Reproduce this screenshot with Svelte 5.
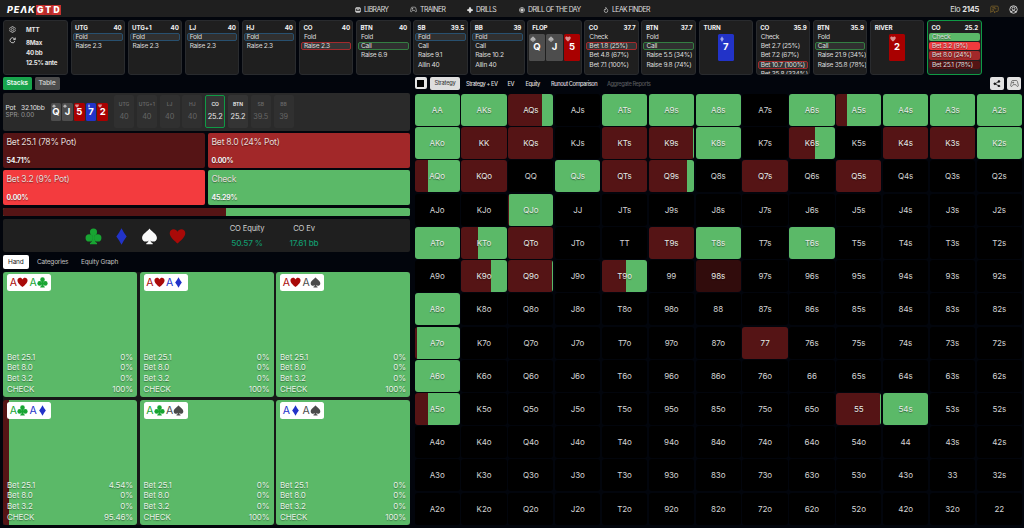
<script>
  const seats = [
    { n: 'UTG', s: '40', a: ['Fold', 'Raise 2.3'], pick: 0, tone: 'blue' },
    { n: 'UTG+1', s: '40', a: ['Fold', 'Raise 2.3'], pick: 0, tone: 'blue' },
    { n: 'LJ', s: '40', a: ['Fold', 'Raise 2.3'], pick: 0, tone: 'blue' },
    { n: 'HJ', s: '40', a: ['Fold', 'Raise 2.3'], pick: 0, tone: 'blue' },
    { n: 'CO', s: '40', a: ['Fold', 'Raise 2.3'], pick: 1, tone: 'red' },
    { n: 'BTN', s: '40', a: ['Fold', 'Call', 'Raise 6.9'], pick: 1, tone: 'green' },
    { n: 'SB', s: '39.5', a: ['Fold', 'Call', 'Raise 9.1', 'Allin 40'], pick: 0, tone: 'blue' },
    { n: 'BB', s: '39', a: ['Fold', 'Call', 'Raise 10.2', 'Allin 40'], pick: 0, tone: 'blue' },
    { n: 'FLOP', cards: [['Q', 'spade'], ['J', 'spade'], ['5', 'heart']] },
    { n: 'CO', s: '37.7', a: ['Check', 'Bet 1.8 (25%)', 'Bet 4.8 (67%)', 'Bet 7.1 (100%)'], pick: 1, tone: 'red' },
    { n: 'BTN', s: '37.7', a: ['Fold', 'Call', 'Raise 5.5 (34%)', 'Raise 9.8 (74%)'], pick: 1, tone: 'green' },
    { n: 'TURN', cards: [['7', 'diamond']] },
    { n: 'CO', s: '35.9', a: ['Check', 'Bet 2.7 (25%)', 'Bet 7.2 (67%)', 'Bet 10.7 (100%)', 'Bet 35.8 (334%)'], pick: 3, tone: 'red' },
    { n: 'BTN', s: '35.9', a: ['Fold', 'Call', 'Raise 21.9 (34%)', 'Raise 35.8 (78%)'], pick: 1, tone: 'green' },
    { n: 'RIVER', cards: [['2', 'heart']] },
    { n: 'CO', s: '25.2', a: ['Check', 'Bet 3.2 (9%)', 'Bet 8.0 (24%)', 'Bet 25.1 (78%)'], active: true }
  ];
  const board = [['Q', 'spade'], ['J', 'spade'], ['5', 'heart'], ['7', 'diamond'], ['2', 'heart']];
  const stacks = [['UTG', '40'], ['UTG+1', '40'], ['LJ', '40'], ['HJ', '40'], ['CO', '25.2'], ['BTN', '25.2'], ['SB', '39.5'], ['BB', '39']];
  const bets = [
    ['Bet 25.1 (78% Pot)', '54.71%', 'maroon'],
    ['Bet 8.0 (24% Pot)', '0.00%', 'brick'],
    ['Bet 3.2 (9% Pot)', '0.00%', 'red'],
    ['Check', '45.29%', 'green']
  ];
  const combos = [
    { c: ['heart', 'club'], v: ['0%', '0%', '0%', '100%'], r: 0 },
    { c: ['heart', 'diamond'], v: ['0%', '0%', '0%', '100%'], r: 0 },
    { c: ['heart', 'spade'], v: ['0%', '0%', '0%', '100%'], r: 0 },
    { c: ['club', 'diamond'], v: ['4.54%', '0%', '0%', '95.46%'], r: 4.54 },
    { c: ['club', 'spade'], v: ['0%', '0%', '0%', '100%'], r: 0 },
    { c: ['diamond', 'spade'], v: ['0%', '0%', '0%', '100%'], r: 0 }
  ];
  const lines = ['Bet 25.1', 'Bet 8.0', 'Bet 3.2', 'CHECK'];
  const ranks = 'AKQJT98765432'.split('');
  // Share of betting per hand, in percent; hands left out are not in range.
  const mix = {
    AA: 1, AKs: 0, AQs: 76, ATs: 0, A9s: 0, A8s: 0, A6s: 0, A5s: 24, A4s: 0, A3s: 0, A2s: 0,
    AKo: 0, KK: 100, KQs: 100, KTs: 100, K9s: 97, K8s: 0, K6s: 56, K4s: 100, K3s: 100, K2s: 0,
    AQo: 30, KQo: 100, QJs: 0, QTs: 100, Q9s: 85, Q7s: 100, Q5s: 100,
    QJo: 1.5, ATo: 0, KTo: 37, QTo: 100, T9s: 100, T8s: 0, T6s: 0,
    K9o: 66, Q9o: 97, T9o: 53, '98s': 100, A8o: 0, A7o: 3.5, '77': 100, A6o: 0, A5o: 28, '55': 98, '54s': 0
  };
  const cells = ranks.flatMap((r, i) =>
    ranks.map((c, j) => (i === j ? r + r : i < j ? r + c + 's' : c + r + 'o'))
  );
</script>

{#snippet suit(kind)}
  <svg class="suit {kind}" viewBox="0 0 24 24" fill="currentColor">
    {#if kind === 'heart'}
      <path d="M12 22C9 19 1 13.500 1 7.500C1 4 3.600 1.800 6.500 1.800C9 1.800 11 3.200 12 5.300C13 3.200 15 1.800 17.500 1.800C20.400 1.800 23 4 23 7.500C23 13.500 15 19 12 22Z" />
    {:else if kind === 'diamond'}
      <path d="M12 .5C14 4.500 16.500 8.500 19.300 12C16.500 15.500 14 19.500 12 23.500C10 19.500 7.500 15.500 4.700 12C7.500 8.500 10 4.500 12 .5Z" />
    {:else if kind === 'club'}
      <circle cx="12" cy="5.800" r="5" /><circle cx="6" cy="14" r="5.200" /><circle cx="18" cy="14" r="5.200" />
      <path d="M10 9h4l-.6 5q.4 6 3.600 7v2H7v-2q3.200-1 3.600-7z" />
    {:else}
      <path d="M12 .8C14 4.500 22.500 8.500 22.500 14C22.500 19.500 16 20.500 13.300 17.500Q13.700 20.700 16.500 21.500V23H7.500V21.500Q10.300 20.700 10.700 17.500C8 20.500 1.500 19.500 1.500 14C1.500 8.500 10 4.500 12 .8Z" />
    {/if}
  </svg>
{/snippet}

{#snippet pad()}
  <svg viewBox="0 0 24 24" fill="none" stroke="currentColor" stroke-width="2">
    <path d="M7 4h10q2 0 2.600 2L22 16q.6 4-2 4-1.500 0-3-2.500L15.500 15h-7L7 17.500Q5.500 20 4 20q-2.600 0-2-4L4.400 6Q5 4 7 4zM8.500 7v5M6 9.500h5M15 8.200v.1M17 11v.1" />
  </svg>
{/snippet}

<div class="page">
  <header>
    <div class="logo"><span>PE<i>Λ</i>K</span><b>G</b><b>T</b><b>D</b></div>
    <nav>
      <a class="n1"><svg viewBox="0 0 24 24" fill="none" stroke="currentColor" stroke-width="3.500"><rect x="3" y="3" width="18" height="18" rx="2" /><path d="M3 5h18M8 11h8M3 18h18" /></svg>LIBRARY</a>
      <a class="n2">{@render pad()}TRAINER</a>
      <a class="n3"><svg viewBox="0 0 24 24" fill="currentColor"><path d="M8.500 1h7v4l3.500 3.500h4v7h-4L15.500 19v4h-7v-4L5 15.500H1v-7h4L8.500 5z" /></svg>DRILLS</a>
      <a class="n4"><svg viewBox="0 0 24 24" fill="none" stroke="currentColor" stroke-width="2.500"><circle cx="12" cy="12" r="10" /><circle cx="12" cy="12" r="4.500" fill="currentColor" /><path d="M12 2v5M12 17v5M2 12h5M17 12h5" /></svg>DRILL OF THE DAY</a>
      <a class="n5"><svg viewBox="0 0 24 24" fill="none" stroke="currentColor" stroke-width="2.500"><path d="M11 1.500c1 4 8 7 8 13a7 7.500 0 0 1-14 0c0-3 1.500-5 3-6.500 0 2 1 3 2 3 2-2 2-5 1-9.500z" /></svg>LEAK FINDER</a>
    </nav>
    <div class="user">
      <span>Elo <b>2145</b></span>
      <svg class="chat" viewBox="0 0 24 24" fill="none" stroke="currentColor" stroke-width="2"><path d="M8 17H4l-2 3V6q0-3 3-3h14q3 0 3 3v8q0 3-3 3h-3l-4 4v-4q-4 0-4-4 0-3 3-3h6M6 7h8M6 11h2" /></svg>
      <svg class="me" viewBox="0 0 24 24" fill="none" stroke="currentColor" stroke-width="2.300"><circle cx="12" cy="12" r="10" /><circle cx="12" cy="9.500" r="4" /><path d="M5 19q2-4 7-4t7 4" /></svg>
    </div>
  </header>

  <section class="timeline">
    <div class="setup">
      <div class="tools">
        <svg viewBox="0 0 24 24" fill="none" stroke="currentColor" stroke-width="2"><path d="M9.500 2h5l.8 3 2 1.200 3-.8 2.200 4-2.200 2.600 2.200 2.600-2.200 4-3-.8-2 1.200-.8 3h-5l-.8-3-2-1.200-3 .8-2.200-4L3.700 12 1.500 9.400l2.200-4 3 .8 2-1.200z" /><circle cx="12" cy="12" r="4" /></svg>
        <svg viewBox="0 0 24 24" fill="none" stroke="currentColor" stroke-width="2.800"><path d="M20 14a8.500 8.500 0 1 1-2-8.500L21 8M21.500 2v7h-7" /></svg>
      </div>
      <div class="game"><span>MTT</span><span>8Max</span><span>40 bb</span><span>12.5% ante</span></div>
    </div>
    {#each seats as seat}
      <div class="seat" class:active={seat.active}>
        <div class="top" class:street={seat.cards}><b>{seat.n}</b><b>{seat.s ?? ''}</b></div>
        {#if seat.cards}
          <div class="cards">
            {#each seat.cards as [r, k]}<div class="card {k}">{@render suit(k)}<b>{r}</b></div>{/each}
          </div>
        {:else}
          <div class="acts">
            {#each seat.a as act, i}<div class="act {i === seat.pick ? seat.tone : ''} {seat.active ? 'fill' + i : ''}">{act}</div>{/each}
          </div>
        {/if}
      </div>
    {/each}
  </section>

  <main>
    <section class="left">
      <div class="switch"><span class="on">Stacks</span><span>Table</span></div>
      <div class="potbar">
        <div class="pot"><div><span>Pot</span><span>32.10bb</span></div><small>SPR: 0.00</small></div>
        <div class="board">
          {#each board as [r, k]}<div class="card {k}">{@render suit(k)}<b>{r}</b></div>{/each}
        </div>
        <div class="stacks">
          {#each stacks as [n, v], i}<div class="stack" class:live={i === 4 || i === 5} class:turn={i === 4}><b>{n}</b><span>{v}</span></div>{/each}
        </div>
      </div>
      <div class="bets">
        {#each bets as [n, p, t]}<div class="bet {t}"><span>{n}</span><b>{p}</b></div>{/each}
      </div>
      <div class="bar"><div style="width: 54.71%"></div></div>
      <div class="info">
        <div class="suits">{@render suit('club')}{@render suit('diamond')}{@render suit('spade')}{@render suit('heart')}</div>
        <div class="stat equity"><span>CO Equity</span><em>50.57 %</em></div>
        <div class="stat"><span>CO Ev</span><em>17.61 bb</em></div>
      </div>
      <div class="tabs"><span class="on">Hand</span><span class="cat">Categories</span><span>Equity Graph</span></div>
      <div class="combos">
        {#each combos as k}
          <div class="combo" style="--r: {k.r}%">
            <div class="tag">{#each k.c as s}<span class={s}>A</span>{@render suit(s)}{/each}</div>
            <div class="lines">{#each lines as l, i}<div><span>{l}</span><span>{k.v[i]}</span></div>{/each}</div>
          </div>
        {/each}
      </div>
    </section>

    <section class="right">
      <div class="views">
        <div class="square"><i></i></div>
        <span class="on">Strategy</span><span class="v2">Strategy + EV</span><span class="v3">EV</span><span class="v4">Equity</span><span class="v5">Runout Comparison</span><span class="v6">Aggregate Reports</span>
        <div class="btns">
          <div><svg viewBox="0 0 24 24" fill="currentColor" stroke="currentColor" stroke-width="2.500"><path d="M19 5L6 12l13 7" fill="none" /><circle cx="19" cy="4.500" r="2.800" /><circle cx="5.500" cy="12" r="2.800" /><circle cx="19" cy="19.500" r="2.800" /></svg></div>
          <div class="gp">{@render pad()}</div>
        </div>
      </div>
      <div class="matrix">
        {#each cells as c}
          <div class="cell" class:in={c in mix} class:half={c === '98s'} style="--r: {mix[c] ?? 0}%">{c}</div>
        {/each}
      </div>
    </section>
  </main>
</div>

<style>
  :global(body) { background: #02050c; }
  * { box-sizing: border-box; }
  .page { width: 1024px; height: 528px; overflow: hidden; background: #02050c; color: #e4e4e4; font-family: Inter, "Liberation Sans", sans-serif; font-size: 7px; white-space: nowrap; display: flex; flex-direction: column; }
  svg { display: block; flex: none; }

  header { height: 17px; flex: none; background: #1f1f1f; display: flex; align-items: center; padding: 2px 6px 0 7px; }
  .logo { width: 348px; display: flex; align-items: center; font-weight: 800; color: #fff; }
  .logo span { font-style: italic; letter-spacing: .9px; font-size: 9px; width: 29px; }
  .logo b { width: 8.200px; height: 10px; line-height: 10px; text-align: center; background: #c8322f; font-size: 8.500px; }
  .logo b:nth-of-type(2) { background: #b92c2a; }
  nav { display: flex; flex: 1; font-size: 6.900px; letter-spacing: -.56px; color: #dedede; }
  nav a { display: flex; align-items: center; gap: 3px; }
  nav svg { width: 6px; height: 6px; }
  .n1 { width: 55px; } .n2 { width: 57px; } .n3 { width: 52px; } .n4 { width: 84px; }
  .n2 svg { width: 7px; height: 7px; }
  .user { display: flex; align-items: center; font-size: 7.500px; letter-spacing: -.25px; }
  .user svg { width: 9px; height: 9px; }
  .user .chat { color: #80652a; margin: 0 10px 0 11px; }

  .timeline { display: flex; gap: 2.500px; padding: 3px 0 0 3px; height: 57.500px; flex: none; }
  .setup, .seat { background: #1f1f1f; border: 1px solid #292b2e; border-radius: 3px; height: 54.500px; }
  .setup { width: 65px; display: flex; padding: 5px; }
  .tools { width: 17px; display: flex; flex-direction: column; gap: 4px; }
  .tools svg { width: 7px; height: 7px; }
  .game { display: flex; flex-direction: column; font-weight: 700; font-size: 6.200px; letter-spacing: -.25px; line-height: 9.800px; }
  .game span:first-child { margin: -1.500px 0 4px; }
  .seat { width: 54.600px; overflow: hidden; padding: 2.500px 1px 0; }
  .seat.active { border-color: #0f9a45; }
  .top { display: flex; justify-content: space-between; font-size: 6.200px; letter-spacing: -.12px; line-height: 8.500px; padding: 0 1.500px 0 2.500px; color: #f2f2f2; }
  .top.street { padding-left: 3px; }
  .act { height: 8.200px; line-height: 6.200px; margin-bottom: 1px; border: 1px solid transparent; border-radius: 2px; padding-left: 2px; font-size: 6.600px; letter-spacing: -.28px; color: #dedede; }
  .acts { padding-top: 1px; }
  .act.blue { border-color: #28506f; background: #303030; }
  .act.red { border-color: #a32a2d; background: #353535; }
  .act.green { border-color: #347d42; background: #303030; }
  .fill0, .fill1, .fill2, .fill3 { text-shadow: 0 1px 1px #0008; }
  .fill0 { background: #5bb968; } .fill1 { background: #f03a3d; } .fill2 { background: #a22829; } .fill3 { background: #551415; }

  .bets { display: grid; grid-template-columns: 202px 202px; grid-auto-rows: 34.700px; gap: 2.600px 3px; }
  .bet { border-radius: 2px; padding: 2.500px 3.500px; display: flex; flex-direction: column; justify-content: space-between; text-shadow: 0 1px 1px #0006; }
  .bet span { font-size: 8.600px; letter-spacing: -.25px; line-height: 12px; color: #e6dcd8; }
  .bet b { font-size: 6.900px; line-height: 8px; letter-spacing: -.2px; color: #f5f5f5; }
  .maroon { background: #551415; } .brick { background: #a22829; } .red { background: #f33b3e; } .bet.green { background: #5bb968; }

  .club { color: #18a532; } .diamond { color: #2233c8; } .heart { color: #a90a08; } .spade { color: #4b4b4b; }

  .cards { display: flex; justify-content: center; gap: 1px; padding-top: 1.500px; margin: 0 -1px; }
  .card { width: 16.500px; height: 27px; border-radius: 1.500px; display: flex; flex-direction: column; align-items: center; background: #4d4d4d; color: #fff; }
  .card.heart { background: #a90000; }
  .card.diamond { background: #2233c8; }
  .card .suit { width: 6px; height: 6px; margin: 2px auto 0 1.500px; color: #ffffff91; }
  .card b { font-size: 9.500px; line-height: 10.500px; color: #fff; }

  main { display: flex; flex: 1; padding: 2.500px 3px 0; gap: 4.500px; min-height: 0; }
  .left { width: 407px; flex: none; display: flex; flex-direction: column; }
  .switch { display: flex; gap: 3px; height: 12.500px; margin-bottom: 3px; font-size: 6.800px; letter-spacing: -.15px; line-height: 12.500px; text-align: center; font-weight: 600; }
  .switch span { width: 25px; background: #4c4c4c; border-radius: 1.500px; color: #c4c4c4; }
  .switch .on { width: 28.500px; background: #18a44c; color: #e8f5ec; }

  .potbar { height: 38px; background: #2a2a2a; border-radius: 2px; display: flex; align-items: center; margin-bottom: 2.500px; }
  .pot { width: 47.500px; padding-left: 2.500px; font-size: 6.700px; letter-spacing: -.15px; line-height: 7px; }
  .pot div { display: flex; gap: 5.500px; }
  .pot small { display: block; font-size: 6.300px; letter-spacing: -.05px; line-height: 6.500px; color: #9a9a9a; }
  .board { display: flex; gap: .8px; width: 63.500px; }
  .board .card { width: 10.900px; height: 18px; }
  .board .card .suit { width: 4px; height: 4px; margin: 1px auto 0 1px; }
  .board .card b { font-size: 9.500px; line-height: 10px; margin-top: -1px; }
  .stacks { display: flex; gap: 2.800px; }
  .stack { width: 20px; height: 32.500px; border-radius: 2px; border: 1px solid transparent; background: #303030; display: flex; flex-direction: column; align-items: center; color: #666; padding-top: 4.500px; }
  .stack b { font-size: 5px; line-height: 7px; font-weight: 600; }
  .stack span { font-size: 7.300px; letter-spacing: -.1px; line-height: 8px; margin-top: 5.500px; }
  .stack.live { color: #ececec; background: #343434; }
  .stack.turn { border-color: #0f9a45; }

  .bar { height: 8.500px; flex: none; margin: 3px 0 2.800px; border-radius: 1.500px; overflow: hidden; background: #5bb968; }
  .bar div { height: 100%; background: #551415; }
  .info { height: 32.500px; flex: none; background: #1f1f1f; border-radius: 2px; display: flex; align-items: center; padding: 1px 0 0 82px; }
  .suits { display: flex; gap: 11px; width: 140px; }
  .suits .suit { width: 17px; height: 17px; }
  .suits .spade { color: #f8f8f8; }
  .stat { width: 40px; text-align: center; font-size: 7.600px; letter-spacing: -.15px; display: flex; flex-direction: column; gap: 5.500px; line-height: 9px; color: #d0d0d0; }
  .stat.equity { width: 44px; margin-right: 15px; }
  .stat em { font-style: normal; color: #129a6e; font-size: 8.200px; font-weight: 500; }
  .tabs { display: flex; flex: none; height: 20.200px; padding-top: 3px; font-size: 6.500px; letter-spacing: -.22px; line-height: 14px; color: #c0c0c0; }
  .tabs .on { width: 25.500px; height: 14px; text-align: center; background: #fff; color: #222; border-radius: 2px; margin-right: 8.500px; }
  .cat { width: 44px; }

  .combos { display: grid; grid-template-columns: repeat(3, 134px); grid-auto-rows: 125.300px; gap: 2.600px 2.500px; background: #171717; flex: none; }
  .combo { border-radius: 3px; padding: 2.500px 4px 3px; display: flex; flex-direction: column; justify-content: space-between; background: linear-gradient(to right, #551415 var(--r), #5bb968 var(--r)); }
  .tag { width: 44px; height: 16.500px; background: #fff; border-radius: 2.500px; display: flex; align-items: center; padding-left: 2.700px; font-size: 10.500px; }
  .tag span { width: 7.500px; }
  .tag .suit { width: 11px; height: 11px; margin-right: 1.300px; }
  .lines { font-size: 8px; letter-spacing: -.13px; line-height: 10.600px; color: #e6f3e6; text-shadow: 0 1px 1px #0006; }
  .lines div { display: flex; justify-content: space-between; }

  .right { flex: 1; min-width: 0; }
  .views { display: flex; align-items: center; height: 12.500px; font-size: 5.700px; letter-spacing: -.45px; font-weight: 500; color: #dcdcdc; margin-bottom: 4.500px; }
  .views > span { flex: none; }
  .square { width: 12px; height: 12px; background: #e4e4e4; border-radius: 2px; display: grid; place-items: center; margin-right: 3.500px; }
  .square i { width: 7px; height: 7px; background: #000; }
  .views .on { width: 30px; height: 12.500px; line-height: 12.500px; text-align: center; background: #dedede; color: #444; border-radius: 2px; margin-right: 6px; letter-spacing: -.25px; }
  .v2 { width: 41.500px; } .v3 { width: 18px; } .v4 { width: 25.500px; } .v5 { width: 56px; } .v6 { color: #54575b; }
  .btns { margin-left: auto; display: flex; gap: 3px; }
  .btns div { width: 14px; height: 12.500px; background: #e2e2e2; color: #111; border-radius: 2px; display: grid; place-items: center; }
  .btns svg { width: 7.500px; height: 7.500px; }
  .btns .gp { color: #555; } .btns .gp svg { width: 9px; height: 9px; }
  .matrix { display: grid; grid-template-columns: repeat(13, 45.300px); grid-auto-rows: 32px; gap: 1.230px 1.550px; }
  .cell { background: #000; border-radius: 3px; display: grid; place-items: center; font-size: 8px; letter-spacing: -.1px; color: #d4d4d4; }
  .cell.in { background: linear-gradient(to right, #551415 var(--r), #5bb968 var(--r)); color: #e8ece8; text-shadow: 0 1px 1px #0007; }
  .cell.half { background: #310c0c; }
</style>
